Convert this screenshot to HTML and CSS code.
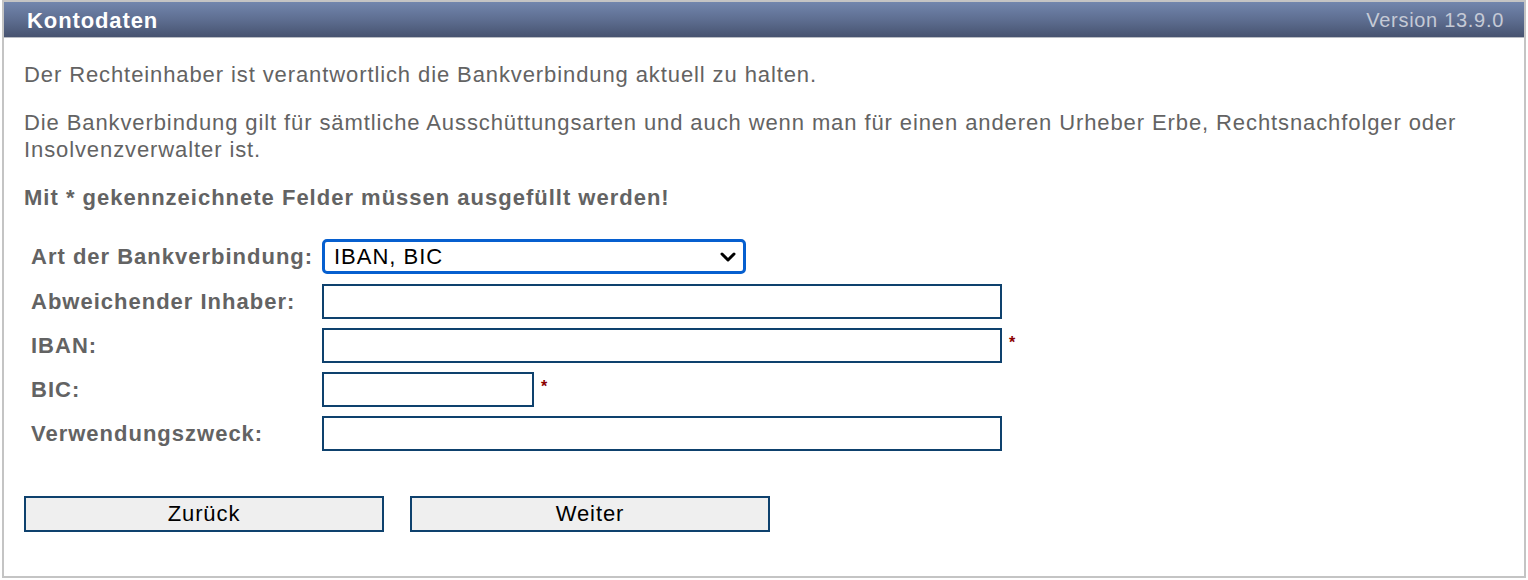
FILE: index.html
```html
<!DOCTYPE html>
<html lang="de">
<head>
<meta charset="utf-8">
<title>Kontodaten</title>
<link rel="stylesheet" href="styles.css">
</head>
<body>
<div class="panel">
  <div class="panel-head">
    <span class="title">Kontodaten</span>
    <span class="version">Version 13.9.0</span>
  </div>
  <div class="panel-body">
    <p class="text">Der Rechteinhaber ist verantwortlich die Bankverbindung aktuell zu halten.</p>
    <p class="text">Die Bankverbindung gilt für sämtliche Ausschüttungsarten und auch wenn man für einen anderen Urheber Erbe, Rechtsnachfolger oder Insolvenzverwalter ist.</p>
    <p class="text strong">Mit * gekennzeichnete Felder müssen ausgefüllt werden!</p>
    <div class="form">
      <div class="row row-select">
        <label class="label">Art der Bankverbindung:</label>
        <div class="select">
          <span>IBAN, BIC</span>
          <svg class="chev" width="18" height="12" viewBox="0 0 18 12"><path d="M3 3 L9 9 L15 3" fill="none" stroke="#000" stroke-width="3" stroke-linecap="round" stroke-linejoin="round"/></svg>
        </div>
      </div>
      <div class="row">
        <label class="label">Abweichender Inhaber:</label>
        <input class="input wide" type="text">
      </div>
      <div class="row">
        <label class="label">IBAN:</label>
        <input class="input wide" type="text"><span class="req">*</span>
      </div>
      <div class="row">
        <label class="label">BIC:</label>
        <input class="input short" type="text"><span class="req">*</span>
      </div>
      <div class="row">
        <label class="label">Verwendungszweck:</label>
        <input class="input wide" type="text">
      </div>
    </div>
    <div class="buttons">
      <button class="btn" type="button">Zurück</button>
      <button class="btn" type="button">Weiter</button>
    </div>
  </div>
</div>
</body>
</html>
```
FILE: styles.css
```css
html, body {
  margin: 0;
  padding: 0;
  background: #fff;
}
body {
  font-family: "Liberation Sans", Arial, Helvetica, sans-serif;
  color: #636363;
}
.panel {
  margin: 0 2px;
  height: 578px;
  box-sizing: border-box;
  border: 2px solid #c4c4c4;
}
.panel-head {
  height: 35px;
  border-bottom: 1px solid #b9bcc4;
  background: linear-gradient(to bottom, #7286ad 0%, #5e6e91 50%, #475370 100%);
  display: flex;
  align-items: center;
  justify-content: space-between;
  padding: 0 20px 0 23px;
}
.title {
  color: #fff;
  font-weight: bold;
  font-size: 22px;
  letter-spacing: 0.9px;
  padding-top: 2px;
}
.version {
  color: #c5cad6;
  font-size: 20px;
  letter-spacing: 0.7px;
  padding-top: 2px;
}
.panel-body {
  padding: 23px 20px 0 20px;
}
.text {
  margin: 0 0 21px 0;
  font-size: 22px;
  line-height: 27px;
  letter-spacing: 0.9px;
}
.strong {
  font-weight: bold;
  letter-spacing: 1px;
  margin-bottom: 0;
}
.form {
  margin-top: 28px;
  padding-left: 7px;
  display: flex;
  flex-direction: column;
  gap: 9px;
}
.row {
  display: flex;
  align-items: center;
  height: 35px;
}
.row-select {
  margin-bottom: 1px;
}
.label {
  width: 291px;
  font-weight: bold;
  font-size: 22px;
  letter-spacing: 1px;
  white-space: nowrap;
}
.select {
  width: 424px;
  height: 35px;
  box-sizing: border-box;
  border: 3px solid #065fcf;
  border-radius: 5px;
  display: flex;
  align-items: center;
  justify-content: space-between;
  padding: 0 6px 0 9px;
  font-size: 22px;
  letter-spacing: 1px;
  color: #000;
}
.chev {
  display: block;
}
.input {
  height: 35px;
  box-sizing: border-box;
  border: 2px solid #0e416d;
  margin: 0;
  padding: 0 6px;
  font-size: 18px;
  background: #fff;
  border-radius: 0;
}
.wide { width: 680px; }
.short { width: 212px; }
.req {
  color: #8b0000;
  font-weight: bold;
  font-size: 16px;
  margin-left: 7px;
  margin-bottom: 6px;
}
.buttons {
  margin-top: 45px;
  display: flex;
  gap: 26px;
}
.btn {
  width: 360px;
  height: 36px;
  box-sizing: border-box;
  border: 2px solid #0e416d;
  background: #efefef;
  color: #000;
  font-family: "Liberation Sans", Arial, sans-serif;
  font-size: 22px;
  letter-spacing: 0.9px;
  padding: 0;
  border-radius: 0;
}
```
